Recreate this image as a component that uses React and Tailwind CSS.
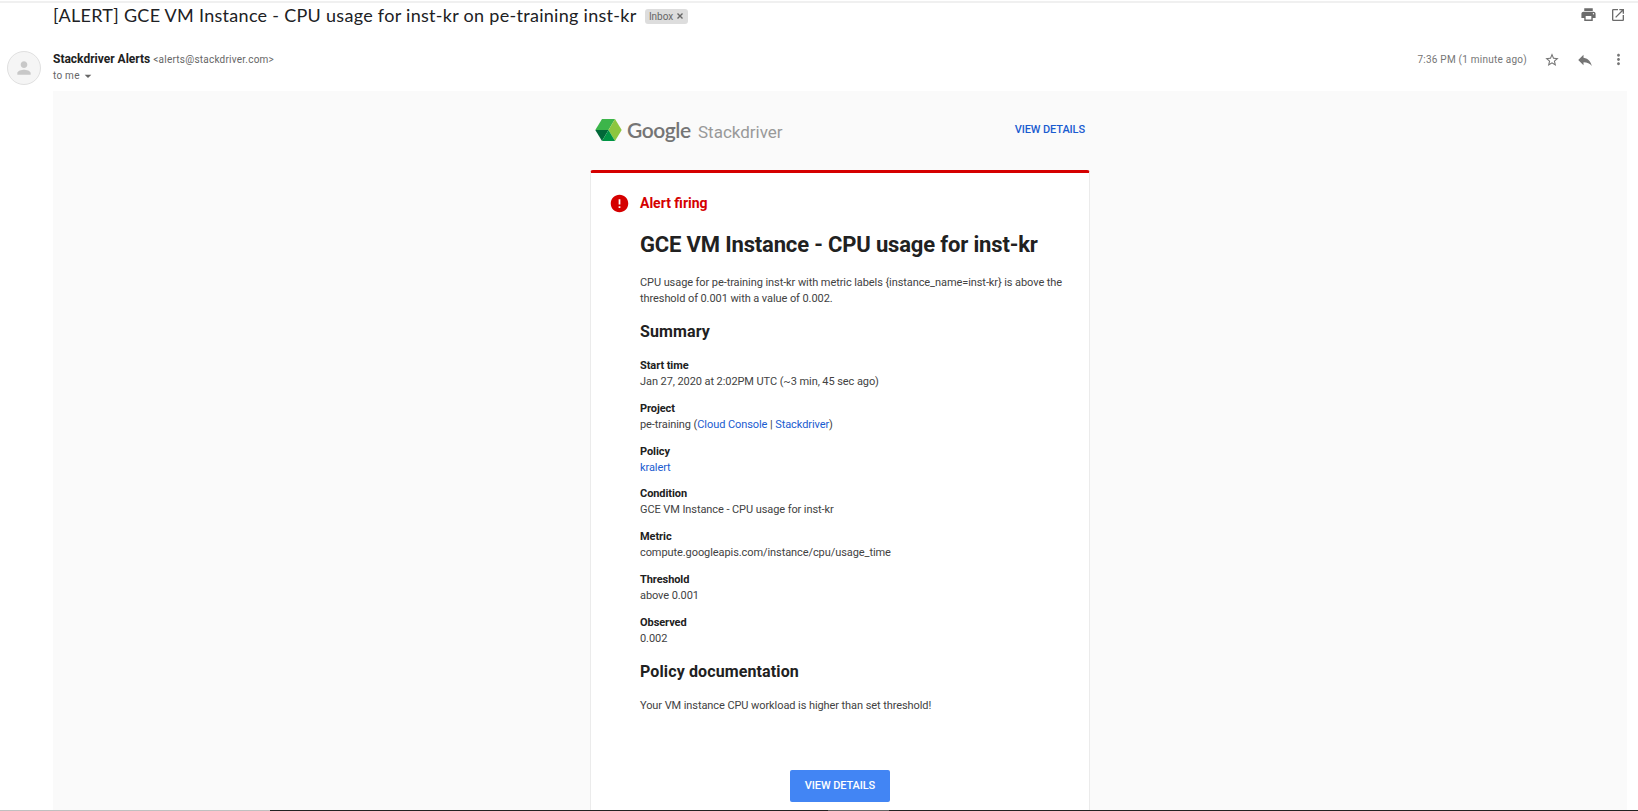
import { MdPrint, MdOpenInNew, MdStarBorder, MdReply, MdMoreVert, MdPerson, MdError, MdArrowDropDown } from "react-icons/md";

const details = [
  ["Start time", "Jan 27, 2020 at 2:02PM UTC (~3 min, 45 sec ago)"],
  ["Project", <>pe-training (<Link>Cloud Console</Link> | <Link>Stackdriver</Link>)</>],
  ["Policy", <Link>kralert</Link>],
  ["Condition", "GCE VM Instance - CPU usage for inst-kr"],
  ["Metric", "compute.googleapis.com/instance/cpu/usage_time"],
  ["Threshold", "above 0.001"],
  ["Observed", "0.002"],
];

function Link({ children }) {
  return <a href="#" className="text-[#1a5cd0]">{children}</a>;
}

function Logo() {
  return (
    <div className="flex items-start">
      <svg className="h-[22px] w-[27px]" viewBox="0 0 27 22">
        <path d="M7 0H20L13.5 11H0.3Z" fill="#3cb54a" />
        <path d="M20 0L26.7 11L20 22L13.5 11Z" fill="#8dc63f" />
        <path d="M0.3 11H13.5L7 22Z" fill="#006838" />
        <path d="M13.5 11L20 22H7Z" fill="#009444" />
      </svg>
      <div className="ml-[5px] flex items-baseline leading-[22px]">
        <span className="w-[64px] font-[Lato,sans-serif] text-[21px] font-semibold tracking-[-0.45px] text-[#757575]">Google</span>
        <span className="ml-[7px] text-[17px] text-[#999]">Stackdriver</span>
      </div>
    </div>
  );
}

export default function App() {
  return (
    <div className="flex h-[811px] w-[1638px] flex-col overflow-hidden bg-white font-[Roboto,sans-serif] text-[#212121]">
      <div className="mt-px h-[2px] shrink-0 bg-[#f0f0f0]" />
      <header className="flex h-[26px] shrink-0 items-center pr-[12px] pl-[53px]">
        <h1 className="-mt-[3px] font-[Lato,sans-serif] text-[18px] leading-[26px] tracking-[0.29px] whitespace-nowrap text-[#202124]">[ALERT] GCE VM Instance - CPU usage for inst-kr on pe-training inst-kr</h1>
        <span className="ml-2 flex h-[15px] w-[43px] items-center justify-center gap-1 rounded-[3px] bg-[#ddd] text-[10px] text-[#666]"><span>Inbox</span><svg className="size-[6px]" viewBox="0 0 6 6" stroke="#666" strokeWidth="1.4"><path d="M0.5 0.5L5.5 5.5M5.5 0.5L0.5 5.5" /></svg></span>
        <div className="mb-[3px] ml-auto flex items-center gap-[13px] text-[#6b6b6b]">
          <MdPrint size={17} />
          <MdOpenInNew size={16} />
        </div>
      </header>
      <div className="flex h-[62px] shrink-0 pr-[11px] pl-[7px]">
        <div className="mt-[22px] flex size-[34px] items-center justify-center rounded-full border border-[#e0e0e0] bg-[#f5f5f5] text-[#c8c8c8]"><MdPerson size={20} /></div>
        <div className="ml-3 pt-[22px]">
          <div className="flex items-baseline leading-[16px]">
            <span className="text-[12px] font-bold">Stackdriver Alerts</span>
            <span className="ml-[3px] text-[10px] tracking-[0.23px] text-[#666]">&lt;alerts@stackdriver.com&gt;</span>
          </div>
          <div className="flex items-center text-[10px] leading-[16px] text-[#666]"><span className="tracking-[0.25px]">to me</span><MdArrowDropDown size={16} /></div>
        </div>
        <div className="mt-[22px] ml-auto flex h-[17px] items-center text-[#757575]">
          <span className="text-[10px] tracking-[0.24px]">7:36 PM (1 minute ago)</span>
          <MdStarBorder className="ml-[17px]" size={16} />
          <MdReply className="ml-4" size={18} />
          <MdMoreVert className="ml-4" size={17} />
        </div>
      </div>
      <main className="mr-[11px] ml-[53px] flex h-[719px] shrink-0 flex-col items-center bg-[#fafafa]">
        <div className="flex h-[79px] w-[500px] items-start justify-between px-[5px] pt-7">
          <Logo />
          <span className="mt-[3px] text-[11px] leading-[16px] font-medium tracking-[-0.1px] text-[#1a5cd0]">VIEW DETAILS</span>
        </div>
        <section className="flex w-[500px] flex-1 flex-col rounded-t-[3px] border-x border-t-[3px] border-x-[#ebebeb] border-t-[#d50000] bg-white">
          <div className="mt-[20px] flex h-[20px] items-center pl-[18px]">
            <MdError size={21} className="text-[#d50000]" />
            <span className="ml-[10px] text-[14px] leading-[20px] font-bold text-[#d50000]">Alert firing</span>
          </div>
          <div className="pl-[49px] text-[11px] leading-[16px]">
            <h2 className="mt-[18px] text-[22px] leading-[28px] font-bold tracking-[-0.16px]">GCE VM Instance - CPU usage for inst-kr</h2>
            <p className="mt-4 tracking-[-0.08px] whitespace-nowrap text-[#424242]">CPU usage for pe-training inst-kr with metric labels {"{instance_name=inst-kr}"} is above the<br />threshold of 0.001 with a value of 0.002.</p>
            <h3 className="mt-[15px] text-[16px] leading-[20px] font-bold tracking-[0.12px]">Summary</h3>
            <dl className="mt-[16px]">
              {details.map(([label, value]) => (
                <div key={label} className="pb-[11px] nth-3:pb-[10px] last:pb-0">
                  <dt className="font-bold tracking-[-0.07px]">{label}</dt>
                  <dd className="tracking-[-0.08px] text-[#424242]">{value}</dd>
                </div>
              ))}
            </dl>
            <h3 className="mt-[15px] text-[16px] leading-[20px] font-bold tracking-[0.12px]">Policy documentation</h3>
            <p className="mt-4 tracking-[-0.08px] text-[#424242]">Your VM instance CPU workload is higher than set threshold!</p>
          </div>
          <button className="mx-auto mt-[56px] h-[32px] w-[100px] rounded-[2px] bg-[#4285f4] text-[11px] font-medium tracking-[-0.1px] text-white">VIEW DETAILS</button>
        </section>
      </main>
      <div className="flex h-px shrink-0 bg-[#222]"><div className="w-[270px] bg-[#c0c0c0]" /><div className="ml-[558px] w-[61px] bg-[#666]" /></div>
    </div>
  );
}
